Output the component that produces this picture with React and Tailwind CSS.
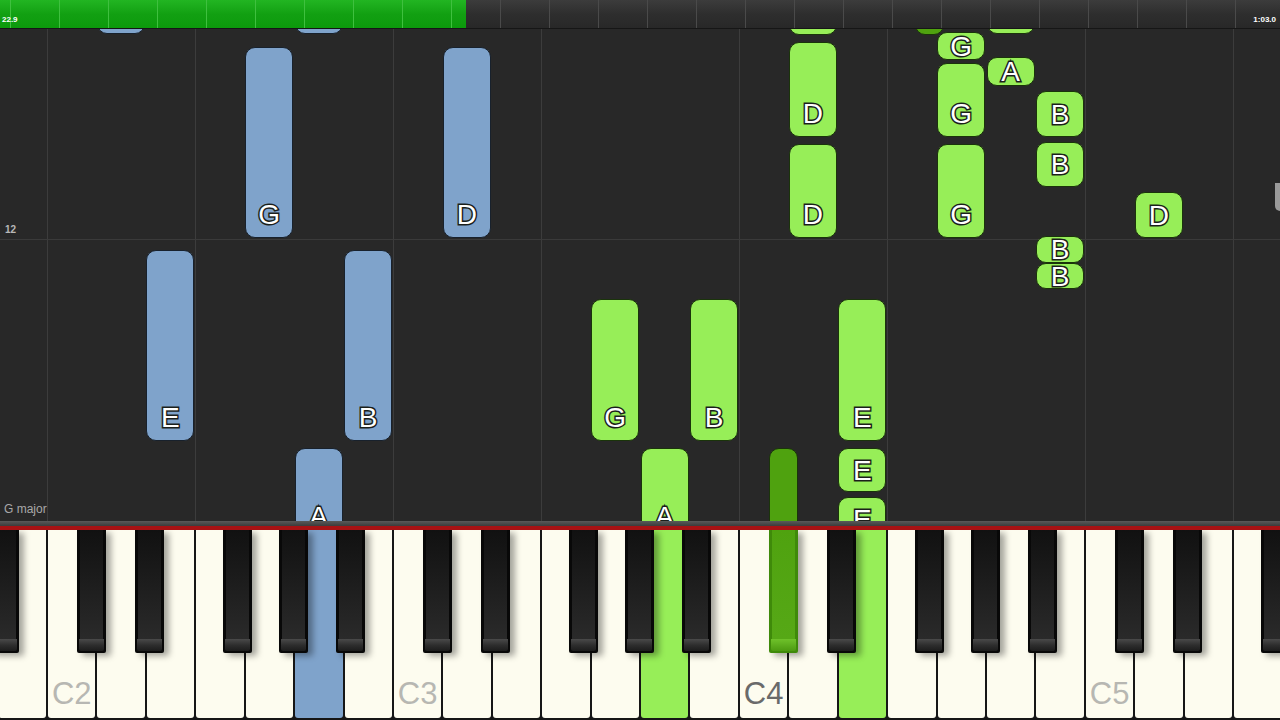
import React from 'react';

const W = 49.43;
const C2 = 47;
const OCT = 346;
const ROLL_TOP = 29;

const whiteIdx = { C: 0, D: 1, E: 2, F: 3, G: 4, A: 5, B: 6 };
const blackOff = { 'C#': 30, 'D#': 88, 'F#': 176, 'G#': 232, 'A#': 289 };

const noteX = (name) => {
  const oct = Number(name.slice(-1));
  const key = name.slice(0, -1);
  const base = C2 + (oct - 2) * OCT;
  if (key.length === 2) return { x: base + blackOff[key], w: 29 };
  return { x: base + whiteIdx[key] * W + 0.5, w: 48 };
};

const notes = [
  // left hand
  { n: 'D2', y1: -20, y2: 34, c: 'blue' },
  { n: 'A2', y1: -20, y2: 34, c: 'blue' },
  { n: 'G2', y1: 47, y2: 238, c: 'blue', l: 'G' },
  { n: 'D3', y1: 47, y2: 238, c: 'blue', l: 'D' },
  { n: 'E2', y1: 250, y2: 441, c: 'blue', l: 'E' },
  { n: 'B2', y1: 250, y2: 441, c: 'blue', l: 'B' },
  { n: 'A2', y1: 448, y2: 540, c: 'blue', l: 'A' },
  // right hand
  { n: 'D4', y1: -20, y2: 35, c: 'green' },
  { n: 'F#4', y1: -20, y2: 35, c: 'dark' },
  { n: 'A4', y1: -20, y2: 34, c: 'green' },
  { n: 'D4', y1: 42, y2: 137, c: 'green', l: 'D' },
  { n: 'D4', y1: 144, y2: 238, c: 'green', l: 'D' },
  { n: 'G4', y1: 32, y2: 60, c: 'green', l: 'G' },
  { n: 'G4', y1: 63, y2: 137, c: 'green', l: 'G' },
  { n: 'G4', y1: 144, y2: 238, c: 'green', l: 'G' },
  { n: 'A4', y1: 57, y2: 86, c: 'green', l: 'A' },
  { n: 'B4', y1: 91, y2: 137, c: 'green', l: 'B' },
  { n: 'B4', y1: 142, y2: 187, c: 'green', l: 'B' },
  { n: 'B4', y1: 236, y2: 263, c: 'green', l: 'B' },
  { n: 'B4', y1: 263, y2: 289, c: 'green', l: 'B' },
  { n: 'D5', y1: 192, y2: 238, c: 'green', l: 'D' },
  { n: 'G3', y1: 299, y2: 441, c: 'green', l: 'G' },
  { n: 'B3', y1: 299, y2: 441, c: 'green', l: 'B' },
  { n: 'E4', y1: 299, y2: 441, c: 'green', l: 'E' },
  { n: 'E4', y1: 448, y2: 492, c: 'green', l: 'E' },
  { n: 'E4', y1: 497, y2: 542, c: 'green', l: 'E' },
  { n: 'A3', y1: 448, y2: 540, c: 'green', l: 'A' },
  { n: 'C#4', y1: 448, y2: 600, c: 'dark' },
];

const noteColor = {
  blue: 'bg-[#7fa3cb] border-[#18212c]',
  green: 'bg-[#97ee58] border-[#1a340a]',
  dark: 'bg-[#4fa20f] border-[#1a340a]',
};

const whites = ['B1'];
[2, 3, 4, 5].forEach((o) => ['C', 'D', 'E', 'F', 'G', 'A', 'B'].forEach((k) => whites.push(k + o)));
whites.push('C6');

const blacks = [];
[1, 2, 3, 4, 5].forEach((o) => Object.keys(blackOff).forEach((k) => blacks.push(k + o)));

const keyHighlight = {
  A2: 'bg-[#7fa3cb]',
  A3: 'bg-[#97ee58]',
  E4: 'bg-[#97ee58]',
};

const Note = ({ note }) => {
  const { x, w } = noteX(note.n);
  const h = note.y2 - note.y1;
  return (
    <div
      className={`absolute flex flex-col justify-end rounded-[10px] border-[1.5px] ${noteColor[note.c]}`}
      style={{ left: x, width: w, top: note.y1 - ROLL_TOP, height: h }}
    >
      {note.l && (
        <div className="flex shrink-0 items-center justify-center" style={{ height: Math.min(h, 48) - 3 }}>
          <span className="text-[28px] leading-none text-white [-webkit-text-stroke:3px_#1b1f1b] [paint-order:stroke_fill]">
            {note.l}
          </span>
        </div>
      )}
    </div>
  );
};

const TopBar = () => (
  <div className="relative h-[29px] shrink-0 overflow-hidden border-b border-[#161616] bg-gradient-to-b from-[#3c3c3c] via-[#2e2e2e] to-[#282828]">
    <div className="absolute inset-y-0 left-0 w-[466px] bg-gradient-to-b from-[#22b522] via-[#12a012] to-[#0c9a0c]" />
    <div className="absolute inset-0 flex pl-[10px]">
      {Array.from({ length: 26 }).map((_, i) => (
        <div
          key={i}
          className={`h-full w-[49px] shrink-0 border-l ${i < 10 ? 'border-[#3fc03f]' : 'border-[#4a4a4a]'}`}
        />
      ))}
    </div>
    <div className="relative flex h-full items-end justify-between pb-[4px] pl-[2px] pr-[4px] text-[8px] font-bold leading-none text-white">
      <span>22.9</span>
      <span>1:03.0</span>
    </div>
  </div>
);

const Roll = () => (
  <div className="relative h-[492px] shrink-0 overflow-hidden bg-[#282828]">
    {[0, 1, 2, 3].flatMap((o) => [C2 + o * OCT, C2 + 148 + o * OCT]).map((x) => (
      <div key={x} className="absolute inset-y-0 w-px bg-[#3c3c3c]" style={{ left: x }} />
    ))}
    <div className="absolute inset-x-0 top-[210px] h-px bg-[#3a3a3a]" />
    <div className="absolute inset-0 flex flex-col justify-between pb-[6px] pl-[4px] pt-[196px]">
      <span className="pl-px text-[10px] font-bold leading-none text-[#b8b8b8]">12</span>
      <span className="text-[12px] leading-none text-[#a8a8a8]">G major</span>
    </div>
    {notes.map((n, i) => (
      <Note key={i} note={n} />
    ))}
    <div className="absolute right-0 top-[154px] h-[28px] w-[5px] rounded-bl-[6px] bg-[#9a9a9a]" />
  </div>
);

const Keyboard = () => (
  <div className="relative h-[190px] shrink-0 overflow-hidden bg-[#161616]">
    <div className="ml-[-2.43px] flex h-full">
      {whites.map((k) => (
        <div key={k} className="h-full w-[49.43px] shrink-0 px-[1px] pb-[2px]">
          <div
            className={`flex h-full items-end justify-center rounded-b-[3px] pb-[9px] ${keyHighlight[k] || 'bg-[#fdfcef]'}`}
          >
            {k.startsWith('C') && k !== 'C6' && (
              <span className={`text-[31px] leading-none ${k === 'C4' ? 'text-[#6a6a6a]' : 'text-[#b7b7b2]'}`}>
                {k}
              </span>
            )}
          </div>
        </div>
      ))}
    </div>
    {blacks.map((k) => {
      const { x } = noteX(k);
      const active = k === 'C#4';
      return (
        <div
          key={k}
          className={`absolute top-0 flex h-[123px] w-[29px] flex-col rounded-b-[2px] shadow-[5px_3px_6px_rgba(0,0,0,0.35)] ${
            active ? 'bg-[#3f8a0a]' : 'bg-[#080808]'
          }`}
          style={{ left: x }}
        >
          <div
            className={`mx-[3px] flex-1 bg-gradient-to-b ${
              active ? 'from-[#4fa20f] to-[#56a816]' : 'from-[#111111] to-[#2a2a2a]'
            }`}
          />
          <div
            className={`mx-[2px] mb-[2px] h-[12px] rounded-b-[2px] bg-gradient-to-b ${
              active ? 'from-[#6fc22a] to-[#4c9a10]' : 'from-[#4a4a4a] via-[#2e2e2e] to-[#1c1c1c]'
            }`}
          />
        </div>
      );
    })}
  </div>
);

export default function App() {
  return (
    <div className="flex h-[720px] w-[1280px] flex-col overflow-hidden bg-[#282828] font-['Liberation_Sans',Arial,sans-serif]">
      <TopBar />
      <Roll />
      <div className="h-[5px] shrink-0 bg-gradient-to-b from-[#5a5a5a] to-[#3c3c3c]" />
      <div className="h-[4px] shrink-0 bg-[#a81214]" />
      <Keyboard />
    </div>
  );
}
